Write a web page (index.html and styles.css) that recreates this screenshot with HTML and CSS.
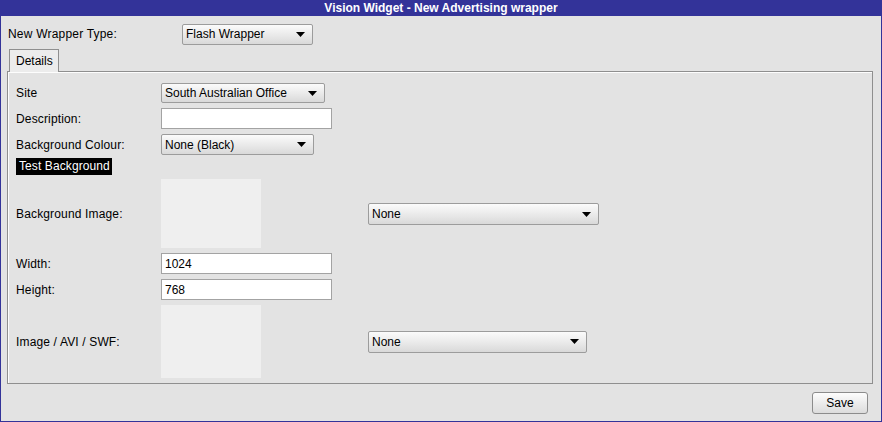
FILE: index.html
```html
<!DOCTYPE html>
<html lang="en">

<head>
    <meta charset="UTF-8" />
    <title>Vision Widget - New Advertising wrapper</title>
    <link rel="stylesheet" href="styles.css">
</head>

<body>
    <div class="win">
        <div class="ttl">Vision Widget - New Advertising wrapper</div>

        <div class="top-row">
            <span class="lbl">New Wrapper Type:</span>
            <div class="combo w-type">Flash Wrapper<svg class="arr" width="9" height="5"><path d="M0 0h9L4.5 5z" /></svg></div>
        </div>

        <div class="tabs">
            <div class="tab">Details</div>
        </div>

        <div class="pnl">
            <div class="row">
                <span class="lbl">Site</span>
                <div class="combo w-site">South Australian Office<svg class="arr" width="9" height="5"><path d="M0 0h9L4.5 5z" /></svg></div>
            </div>
            <div class="row">
                <span class="lbl">Description:</span>
                <div class="inp"></div>
            </div>
            <div class="row">
                <span class="lbl">Background Colour:</span>
                <div class="combo w-col">None (Black)<svg class="arr" width="9" height="5"><path d="M0 0h9L4.5 5z" /></svg></div>
            </div>
            <div class="row">
                <span class="test-bg">Test Background</span>
            </div>
            <div class="row">
                <span class="lbl">Background Image:</span>
                <div class="img-box"></div>
                <div class="combo w-none">None<svg class="arr" width="9" height="5"><path d="M0 0h9L4.5 5z" /></svg></div>
            </div>
            <div class="row">
                <span class="lbl">Width:</span>
                <div class="inp">1024</div>
            </div>
            <div class="row">
                <span class="lbl">Height:</span>
                <div class="inp">768</div>
            </div>
            <div class="row">
                <span class="lbl">Image / AVI / SWF:</span>
                <div class="img-box tall"></div>
                <div class="combo w-none2">None<svg class="arr" width="9" height="5"><path d="M0 0h9L4.5 5z" /></svg></div>
            </div>
        </div>

        <div class="foot">
            <div class="btn">Save</div>
        </div>
    </div>
</body>

</html>
```

FILE: styles.css
```css
body {
    margin: 0;
    font-family: "Liberation Sans", Arial, sans-serif;
    font-size: 12px;
    color: #000;
}

.win {
    width: 880px;
    height: 421px;
    border: 1px solid #333399;
    border-top: none;
    background: #e3e3e3;
    display: flex;
    flex-direction: column;
}

.ttl {
    height: 16px;
    line-height: 16px;
    background: #333399;
    color: #fff;
    font-weight: bold;
    text-align: center;
}

.top-row {
    display: flex;
    align-items: center;
    padding: 7px 0 0 7px;
    height: 22px;
}

.top-row .lbl {
    width: 174px;
    letter-spacing: 0.2px;
}

.combo {
    box-sizing: border-box;
    height: 21px;
    border: 1px solid #9c9c9c;
    border-radius: 2px;
    background: linear-gradient(#fbfbfb, #e9e9e9 55%, #d9d9d9);
    display: flex;
    align-items: center;
    justify-content: space-between;
    padding: 0 7px 0 3px;
}

.arr {
    fill: #000;
}

.w-type {
    width: 131px;
}

.w-site {
    width: 164px;
    height: 20px;
}

.w-col {
    width: 153px;
}

.w-none {
    width: 231px;
    height: 22px;
    margin-left: 107px;
}

.w-none2 {
    width: 219px;
    height: 22px;
    margin-left: 107px;
}

.tabs {
    display: flex;
    padding: 4px 0 0 8px;
    height: 22px;
    box-sizing: content-box;
}

.tab {
    box-sizing: border-box;
    width: 50px;
    height: 23px;
    border: 1px solid #8f8f8f;
    border-bottom: none;
    background: #ececec;
    padding: 4px 0 0 6px;
    position: relative;
    z-index: 1;
}

.pnl {
    box-sizing: border-box;
    margin-left: 6px;
    width: 866px;
    height: 313px;
    border: 1px solid #8f8f8f;
    box-shadow: inset 1px 1px 0 #fdfdfd;
    padding: 11px 0 0 8px;
    display: flex;
    flex-direction: column;
    gap: 5px;
}

.row {
    display: flex;
    align-items: center;
}

.row .lbl {
    width: 145px;
    letter-spacing: 0.15px;
}

.inp {
    box-sizing: border-box;
    width: 171px;
    height: 21px;
    background: #fff;
    border: 1px solid #a3a3a3;
    padding: 2px 0 0 3px;
    line-height: 16px;
}

.test-bg {
    background: #000;
    color: #fff;
    padding: 1px 2px 2px 3px;
    line-height: 14px;
    letter-spacing: 0.1px;
    margin-top: -2px;
}

.img-box {
    width: 100px;
    height: 69px;
    background: #efefef;
    margin-top: -1px;
}

.img-box.tall {
    height: 73px;
    margin-top: 0;
}

.foot {
    flex: 1;
    display: flex;
    justify-content: flex-end;
    align-items: flex-start;
    padding: 8px 13px 0 0;
}

.btn {
    box-sizing: border-box;
    width: 56px;
    height: 22px;
    border: 1px solid #8c8c8c;
    border-radius: 3px;
    background: linear-gradient(#fdfdfd, #ececec 50%, #dcdcdc);
    text-align: center;
    line-height: 20px;
}
```
